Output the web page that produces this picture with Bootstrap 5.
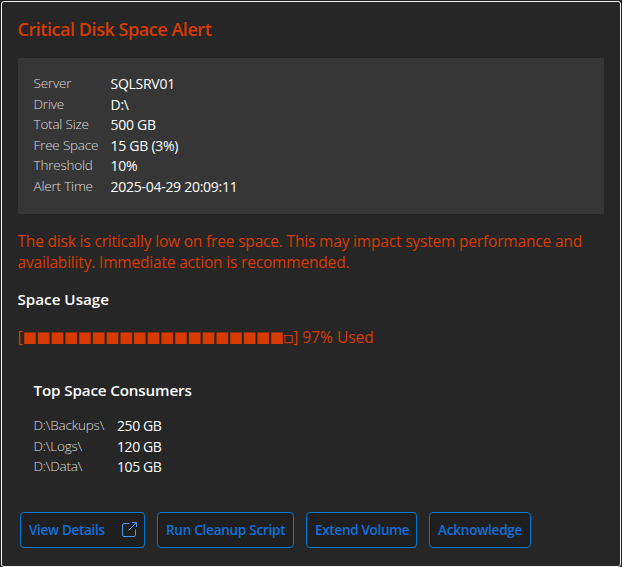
<!DOCTYPE html>
<html lang="en" data-bs-theme="dark">
<head>
<meta charset="utf-8">
<meta name="viewport" content="width=device-width, initial-scale=1">
<title>Critical Disk Space Alert</title>
<link href="https://cdn.jsdelivr.net/npm/bootstrap@5.3.0/dist/css/bootstrap.min.css" rel="stylesheet">
<style>
  body { background: #201f22; font-family: "Segoe UI", "Open Sans", sans-serif; color: #fff; overflow: hidden; }
  .alert-card { height: 566px; margin: 1px 1px 0; background: #262626; border: 1px solid #f5f3f1; border-radius: 3px; }
  .card-content { padding: 0 16px 0 15.5px; }
  .alert-title { font-size: 18px; font-weight: 600; line-height: 24px; padding-top: 15px; color: #d83b01; letter-spacing: -.45px; }
  .facts { height: 156px; margin-top: 17px; padding-top: 15px; background: #363636; }
  .fact { height: 20.6px; line-height: 20px; }
  .fact-name { width: 77px; font-size: 13.5px; line-height: 21px; font-weight: 300; color: #dddbd9; letter-spacing: -.2px; }
  .fact-value { font-size: 14px; padding-top: 1px; letter-spacing: -.27px; }
  .consumers .fact-name { width: 83.5px; }
  .consumers .fact-value { letter-spacing: -.4px; }
  .warn { color: #d83b01; font-size: 15.5px; line-height: 21px; letter-spacing: -.18px; }
  .message { margin-top: 17px; }
  .section-title { font-size: 15.2px; font-weight: 600; line-height: 20px; letter-spacing: -.14px; }
  .usage-title { margin-top: 16px; letter-spacing: 0; }
  .usage { margin-top: 18px; height: 21px; letter-spacing: 0; }
  .blocks { font: 15px/21px "DejaVu Sans", sans-serif; letter-spacing: -.45px; }
  .block-free { font: bold 10.500px/22px "DejaVu Sans", sans-serif; -webkit-text-stroke: .3px #d83b01; }
  .consumers { margin-top: 32px; }
  .consumer-list { margin-top: 15px; }
  .actions { margin-top: 35px; gap: 12px; padding-left: 18px; }
  .action { height: 36px; padding: 0 8px; border: 1px solid #0078d4; border-radius: 4px; background: #1f1f1f; color: #1070d8; font-size: 13.5px; font-weight: 600; line-height: 34px; white-space: nowrap; letter-spacing: -.2px; }
  .a1 { width: 125px; padding-right: 7px; letter-spacing: -.3px; } .a2 { width: 137px; letter-spacing: -.25px; } .a3 { width: 111px; letter-spacing: -.3px; } .a4 { width: 102px; }
</style>
</head>
<body>
<main class="alert-card">
  <div class="card-content">
    <h1 class="alert-title mb-0">Critical Disk Space Alert</h1>
    <section class="facts px-3">
      <div class="fact d-flex"><span class="fact-name">Server</span><span class="fact-value">SQLSRV01</span></div>
      <div class="fact d-flex"><span class="fact-name">Drive</span><span class="fact-value">D:\</span></div>
      <div class="fact d-flex"><span class="fact-name">Total Size</span><span class="fact-value">500 GB</span></div>
      <div class="fact d-flex"><span class="fact-name">Free Space</span><span class="fact-value">15 GB (3%)</span></div>
      <div class="fact d-flex"><span class="fact-name">Threshold</span><span class="fact-value">10%</span></div>
      <div class="fact d-flex"><span class="fact-name">Alert Time</span><span class="fact-value">2025-04-29 20:09:11</span></div>
    </section>
    <p class="warn message mb-0">The disk is critically low on free space. This may impact system performance and<br>availability. Immediate action is recommended.</p>
    <h2 class="section-title usage-title mb-0">Space Usage</h2>
    <div class="warn usage d-flex"><span>[</span><span class="blocks">■■■■■■■■■■■■■■■■■■■</span><span class="block-free">□</span><span>] 97% Used</span></div>
    <section class="consumers px-3">
      <h2 class="section-title mb-0">Top Space Consumers</h2>
      <div class="consumer-list">
        <div class="fact d-flex"><span class="fact-name">D:\Backups\</span><span class="fact-value">250 GB</span></div>
        <div class="fact d-flex"><span class="fact-name">D:\Logs\</span><span class="fact-value">120 GB</span></div>
        <div class="fact d-flex"><span class="fact-name">D:\Data\</span><span class="fact-value">105 GB</span></div>
      </div>
    </section>
  </div>
  <div class="actions d-flex">
    <button class="action a1 d-flex align-items-center justify-content-between" type="button">View Details
      <svg width="15" height="15" viewBox="0 0 15 15" fill="none" stroke="#4a9cf0" aria-hidden="true"><path d="M7.5 1.5H2Q.5 1.500.5 3V13Q.5 14.500 2 14.500H12Q13.500 14.500 13.500 13V7.500M10 .5H14.500V5M14.500.5 6.500 8.500"/></svg>
    </button>
    <button class="action a2" type="button">Run Cleanup Script</button>
    <button class="action a3" type="button">Extend Volume</button>
    <button class="action a4" type="button">Acknowledge</button>
  </div>
</main>
<script src="https://cdn.jsdelivr.net/npm/bootstrap@5.3.0/dist/js/bootstrap.bundle.min.js"></script>
</body>
</html>
